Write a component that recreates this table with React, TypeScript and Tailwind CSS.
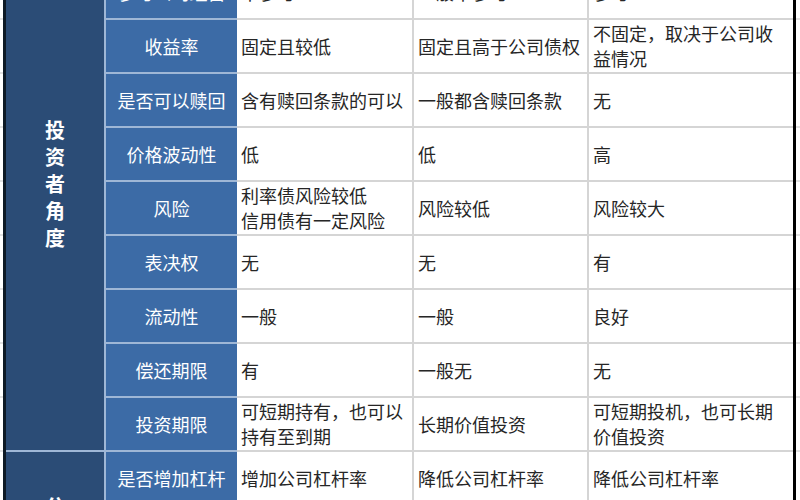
const font = { fontFamily: '"Noto Sans CJK SC", "Noto Sans", sans-serif' }

type Row = { head: string; cells: string[][] }

const investorRows: Row[] = [
    { head: "参与公司经营", cells: [["不参与"], ["一般不参与"], ["参与"]] },
    { head: "收益率", cells: [["固定且较低"], ["固定且高于公司债权"], ["不固定，取决于公司收", "益情况"]] },
    { head: "是否可以赎回", cells: [["含有赎回条款的可以"], ["一般都含赎回条款"], ["无"]] },
    { head: "价格波动性", cells: [["低"], ["低"], ["高"]] },
    { head: "风险", cells: [["利率债风险较低", "信用债有一定风险"], ["风险较低"], ["风险较大"]] },
    { head: "表决权", cells: [["无"], ["无"], ["有"]] },
    { head: "流动性", cells: [["一般"], ["一般"], ["良好"]] },
    { head: "偿还期限", cells: [["有"], ["一般无"], ["无"]] },
    { head: "投资期限", cells: [["可短期持有，也可以", "持有至到期"], ["长期价值投资"], ["可短期投机，也可长期", "价值投资"]] },
]

const companyRows: Row[] = [
    { head: "是否增加杠杆", cells: [["增加公司杠杆率"], ["降低公司杠杆率"], ["降低公司杠杆率"]] },
    { head: "融资成本", cells: [["较低"], ["较高"], ["高"]] },
]

const cellWidths = ["w-[177px] border-r-2", "w-[175px] border-r-2", "w-[204px]"]

function TableRow({ row }: { row: Row }) {
    return (
        <div className="flex h-[54px] shrink-0">
            <div className="flex w-[131px] items-center justify-center border-b-2 border-[#9fb7d6] bg-[#3c6ba6] text-[18px] text-white">
                {row.head}
            </div>
            {row.cells.map((lines, i) => (
                <div
                    key={i}
                    className={`flex flex-col justify-center overflow-hidden whitespace-nowrap border-b-2 border-[#d5d5d5] bg-white pl-[4px] text-[18px] leading-[25px] text-[#262626] ${cellWidths[i]}`}
                >
                    {lines.map(l => <span key={l}>{l}</span>)}
                </div>
            ))}
        </div>
    )
}

function Section({ label, rows, padTop }: { label: string; rows: Row[]; padTop: string }) {
    return (
        <div className="flex shrink-0">
            <div className={`flex w-[100px] flex-col items-center border-b-2 border-r-2 border-[#9fb7d6] bg-[#2b4c76] text-[20px] font-bold leading-[27px] text-white ${padTop}`}>
                {label.split("").map((c, i) => <span key={i}>{c}</span>)}
            </div>
            <div className="flex flex-col">
                {rows.map(r => <TableRow key={r.head} row={r} />)}
            </div>
        </div>
    )
}

function Strip({ width }: { width: string }) {
    return (
        <div className={`-mt-[34px] flex shrink-0 flex-col ${width}`}>
            {Array.from({ length: 11 }).map((_, i) => (
                <div key={i} className="h-[54px] shrink-0 border-b-2 border-[#e2e2e2] bg-white" />
            ))}
        </div>
    )
}

export default function App() {
    return (
        <div className="flex h-[500px] w-[800px] overflow-hidden bg-white" style={font}>
            <Strip width="w-[3px]" />
            <div className="w-[3px] shrink-0 bg-[#0d1a26]" />
            <div className="-mt-[34px] flex w-[787px] shrink-0 flex-col">
                <Section label="投资者角度" rows={investorRows} padTop="justify-center pb-[50px]" />
                <Section label="公司角度" rows={companyRows} padTop="pt-[40px]" />
            </div>
            <div className="w-[3px] shrink-0 bg-black" />
            <Strip width="w-[4px]" />
        </div>
    )
}
